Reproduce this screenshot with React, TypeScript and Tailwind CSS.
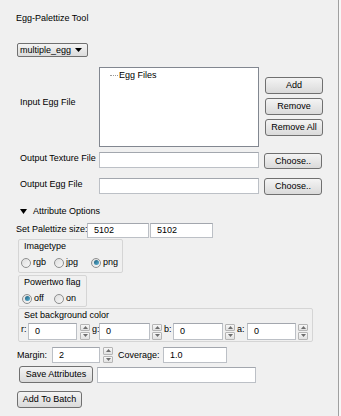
import type { ReactNode } from 'react'

function Btn({ children, className = '' }: { children: ReactNode; className?: string }) {
  return (
    <button
      type="button"
      className={`flex items-center justify-center whitespace-nowrap rounded-[3px] border border-[#707070] bg-gradient-to-b from-[#f4f4f4] to-[#dadada] leading-none text-black ${className}`}
    >
      {children}
    </button>
  )
}

function Field({ value = '', className = '' }: { value?: string; className?: string }) {
  return (
    <div className={`flex items-center border border-[#bcc0c6] border-t-[#a3a7ae] bg-white pl-[6px] leading-none ${className}`}>
      {value}
    </div>
  )
}

function Spin() {
  return (
    <div className="flex h-[16px] w-[10px] flex-col gap-px">
      <div className="flex flex-1 items-center justify-center rounded-[1px] border border-[#b5b5b5] bg-gradient-to-b from-[#f7f7f7] to-[#e2e2e2]">
        <svg width="5" height="3" viewBox="0 0 5 3"><path d="M2.5 0 L5 3 L0 3 Z" fill="#6e6e6e" /></svg>
      </div>
      <div className="flex flex-1 items-center justify-center rounded-[1px] border border-[#b5b5b5] bg-gradient-to-b from-[#f7f7f7] to-[#e2e2e2]">
        <svg width="5" height="3" viewBox="0 0 5 3"><path d="M0 0 L5 0 L2.5 3 Z" fill="#6e6e6e" /></svg>
      </div>
    </div>
  )
}

function Radio({ label, checked = false, className = '' }: { label: string; checked?: boolean; className?: string }) {
  return (
    <div className={`flex items-center ${className}`}>
      <div className="flex h-[10px] w-[10px] items-center justify-center rounded-full border border-[#8e8f8f] bg-gradient-to-br from-[#dedede] to-[#f8f8f8]">
        {checked && <div className="h-[5px] w-[5px] rounded-full bg-gradient-to-br from-[#1c5e7c] to-[#5fb6d8]" />}
      </div>
      <span className="ml-[2px] leading-none">{label}</span>
    </div>
  )
}

function Group({ title, className = '', children }: { title: string; className?: string; children: ReactNode }) {
  return (
    <div className={`rounded-[2px] border border-[#d5d5d5] ${className}`}>
      <div className="h-[13px] whitespace-nowrap pl-[5px] leading-[13px]">{title}</div>
      {children}
    </div>
  )
}

export default function App() {
  return (
    <div className="flex h-[416px] w-[341px] overflow-hidden whitespace-nowrap bg-[#f0f0f0] font-['Liberation_Sans',Arial,sans-serif] text-[9px] text-black">
      <div className="flex w-[338px] flex-col">
        <div className="ml-[16px] mt-[12px] h-[13px] leading-[13px]">Egg-Palettize Tool</div>

        <div className="ml-[17px] mt-[18px] flex h-[14px] w-[71px] items-center justify-between rounded-[2px] border border-[#707070] bg-gradient-to-b from-[#f4f4f4] to-[#dcdcdc] pl-[2px] pr-[5px] leading-none">
          <span>multiple_egg</span>
          <svg width="7" height="4" viewBox="0 0 7 4"><path d="M0 0 L7 0 L3.5 4 Z" fill="#000" /></svg>
        </div>

        <div className="mt-[10px] flex">
          <div className="w-[99px] pl-[20px] pt-[29px] leading-[13px]">Input Egg File</div>
          <div className="h-[80px] w-[160px] border border-[#828790] bg-white">
            <div className="ml-[10px] mt-[3px] flex items-center">
              <div className="w-[8px] border-t border-dotted border-[#9a9a9a]" />
              <span className="ml-[1px] leading-none">Egg Files</span>
            </div>
          </div>
          <div className="ml-[6px] mt-[10px] flex w-[58px] flex-col gap-[4px]">
            <Btn className="h-[17px]">Add</Btn>
            <Btn className="h-[17px]">Remove</Btn>
            <Btn className="h-[17px]">Remove All</Btn>
          </div>
        </div>

        <div className="mt-[4px] flex items-center">
          <div className="w-[99px] pl-[20px] pb-[4px] leading-[13px]">Output Texture File</div>
          <Field className="h-[16px] w-[160px]" />
          <Btn className="ml-[5px] mt-[2px] h-[16px] w-[58px]">Choose..</Btn>
        </div>

        <div className="mt-[8px] flex items-center">
          <div className="w-[99px] pl-[20px] pb-[4px] leading-[13px]">Output Egg File</div>
          <Field className="h-[16px] w-[160px]" />
          <Btn className="ml-[5px] mt-[1px] h-[17px] w-[58px]">Choose..</Btn>
        </div>

        <div className="ml-[20px] mt-[10px] flex h-[13px] items-center">
          <svg width="7" height="5" viewBox="0 0 7 5"><path d="M0 0 L7 0 L3.5 5 Z" fill="#000" /></svg>
          <span className="ml-[6px] leading-none">Attribute Options</span>
        </div>

        <div className="ml-[16px] mt-[5px] flex h-[15px] items-center">
          <span className="w-[71px] pb-[3px] leading-none">Set Palettize size:</span>
          <Field value="5102" className="h-[15px] w-[62px]" />
          <Field value="5102" className="ml-[1px] h-[15px] w-[63px]" />
        </div>

        <Group title="Imagetype" className="ml-[18px] mt-[1px] h-[34px] w-[105px]">
          <div className="mt-[3px] flex h-[13px] items-center pl-[2px]">
            <Radio label="rgb" className="w-[33px]" />
            <Radio label="jpg" className="w-[37px]" />
            <Radio label="png" checked />
          </div>
        </Group>

        <Group title="Powertwo flag" className="ml-[18px] mt-[2px] h-[32px] w-[69px]">
          <div className="mt-[3px] flex h-[13px] items-center pl-[3px]">
            <Radio label="off" checked className="w-[32px]" />
            <Radio label="on" />
          </div>
        </Group>

        <Group title="Set background color" className="ml-[18px] mt-px h-[34px] w-[295px]">
          <div className="mt-px flex h-[17px] items-center pl-[2px]">
            <span className="w-[7px] pb-[4px] leading-none">r:</span>
            <Field value="0" className="h-[17px] w-[49px]" />
            <div className="ml-[3px]"><Spin /></div>
            <span className="ml-[2px] w-[7px] pb-[4px] leading-none">g:</span>
            <Field value="0" className="h-[17px] w-[51px]" />
            <div className="ml-[2px]"><Spin /></div>
            <span className="ml-[2px] w-[9px] pb-[4px] leading-none">b:</span>
            <Field value="0" className="h-[17px] w-[50px]" />
            <div className="ml-[2px]"><Spin /></div>
            <span className="ml-[2px] w-[10px] pb-[4px] leading-none">a:</span>
            <Field value="0" className="h-[17px] w-[49px]" />
            <div className="ml-[2px]"><Spin /></div>
          </div>
        </Group>

        <div className="ml-[17px] mt-[5px] flex h-[16px] items-center">
          <span className="w-[35px] leading-none">Margin:</span>
          <Field value="2" className="h-[16px] w-[48px]" />
          <div className="ml-[3px]"><Spin /></div>
          <span className="ml-[5px] w-[45px] leading-none">Coverage:</span>
          <Field value="1.0" className="h-[16px] w-[64px]" />
        </div>

        <div className="ml-[19px] mt-[3px] flex h-[17px] items-center">
          <Btn className="h-[17px] w-[74px]">Save Attributes</Btn>
          <Field className="ml-[4px] h-[16px] w-[159px]" />
        </div>

        <Btn className="ml-[17px] mt-[8px] h-[17px] w-[65px]">Add To Batch</Btn>
      </div>
      <div className="w-px bg-[#a0a0a0]" />
      <div className="w-[2px] bg-[#f7f7f7]" />
    </div>
  )
}
